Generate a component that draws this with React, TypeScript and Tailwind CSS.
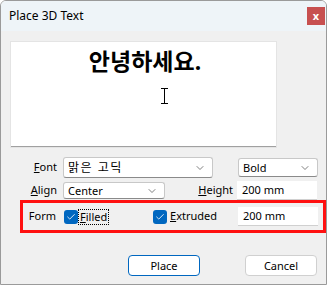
import { ChevronDown, Check } from "lucide-react";

const font = { fontFamily: '"Noto Sans", "Noto Sans CJK KR", sans-serif' };

function Combo({ text, className, textClass = "" }: { text: string; className: string; textClass?: string }) {
  return (
    <div className={`flex items-center justify-between bg-white border border-[#c8c8c8] border-b-[#8a8a8a] rounded-[3px] pl-[4px] pr-[6px] ${className}`}>
      <span className={`leading-none ${textClass}`}>{text}</span>
      <ChevronDown size={12} strokeWidth={1.5} className="text-[#555]" />
    </div>
  );
}

function Box({ checked }: { checked: boolean }) {
  return (
    <span className="flex items-center justify-center w-[14px] h-[14px] rounded-[3px] bg-[#0067c0]">
      {checked && <Check size={10} strokeWidth={2} className="text-white" />}
    </span>
  );
}

export default function App() {
  return (
    <div className="w-[328px] h-[286px] bg-white text-[11px] text-black" style={font}>
      <div className="w-[327px] h-[285px] flex flex-col border border-[#9a9a9a] rounded-t-[6px] overflow-hidden">
        <div className="h-[30px] bg-[#eef4f8] flex items-center justify-between pl-[8px] pr-[1px] shrink-0">
          <span className="text-[12px]">Place 3D Text</span>
          <span className="w-[18px] h-[18px] bg-[#c75050] text-white text-[11px] font-bold flex items-center justify-center leading-none pb-[2px]">x</span>
        </div>
        <div className="flex-1 bg-[#f0f0f0] pl-[10px] flex flex-col">
          <div className="mt-[11px] w-[265px] h-[105px] bg-white border-b border-[#a0a0a0] shadow-[0_0_0_1px_#e4e4e4] relative">
            <div className="text-center text-[23px] font-bold leading-none pt-[8px] pl-[3px]">안녕하세요.</div>
            <span className="absolute left-[150px] top-[46px] w-[7px] h-[16px] flex flex-col items-center">
              <span className="w-[7px] h-px bg-black" />
              <span className="w-px flex-1 bg-black" />
              <span className="w-[7px] h-px bg-black" />
            </span>
          </div>

          <div className="mt-[10px] flex items-center h-[21px]">
            <span className="w-[46px] text-right"><u>F</u>ont</span>
            <Combo text="맑은 고딕" className="ml-[6px] w-[150px] h-[21px] text-[12px]" textClass="tracking-[1.5px]" />
            <Combo text="Bold" className="ml-[25px] w-[80px] h-[19px]" />
          </div>

          <div className="mt-[3px] flex items-center h-[19px]">
            <span className="w-[46px] text-right"><u>A</u>lign</span>
            <Combo text="Center" className="ml-[6px] w-[102px] h-[17px] bg-[#fbfbfb]" />
            <span className="w-[68px] text-right"><u>H</u>eight</span>
            <div className="ml-[4px] w-[80px] h-[19px] bg-white border-b border-[#d0d0d0] pl-[5px] flex items-center">200 mm</div>
          </div>

          <div className="ml-[9px] w-[306px] h-[33px] border-[3px] border-[#ff1010] flex items-center">
            <span className="w-[33px] text-right">Form</span>
            <div className="ml-[8px] w-[89px] flex items-center">
              <Box checked />
              <span className="ml-[1px] px-[1px] outline outline-1 outline-dotted outline-black leading-[14px]"><u>F</u>illed</span>
            </div>
            <div className="w-[85px] flex items-center">
              <Box checked />
              <span className="ml-[3px]"><u>E</u>xtruded</span>
            </div>
            <div className="w-[80px] h-[19px] bg-white border-b border-[#d0d0d0] pl-[5px] flex items-center">200 mm</div>
          </div>

          <div className="mt-[22px] flex">
            <button className="ml-[117px] w-[72px] h-[21px] bg-white border border-[#0067c0] rounded-[4px] leading-none">Place</button>
            <button className="ml-[45px] w-[72px] h-[21px] bg-white border border-[#d0d0d0] rounded-[4px] leading-none">Cancel</button>
          </div>
        </div>
      </div>
    </div>
  );
}
